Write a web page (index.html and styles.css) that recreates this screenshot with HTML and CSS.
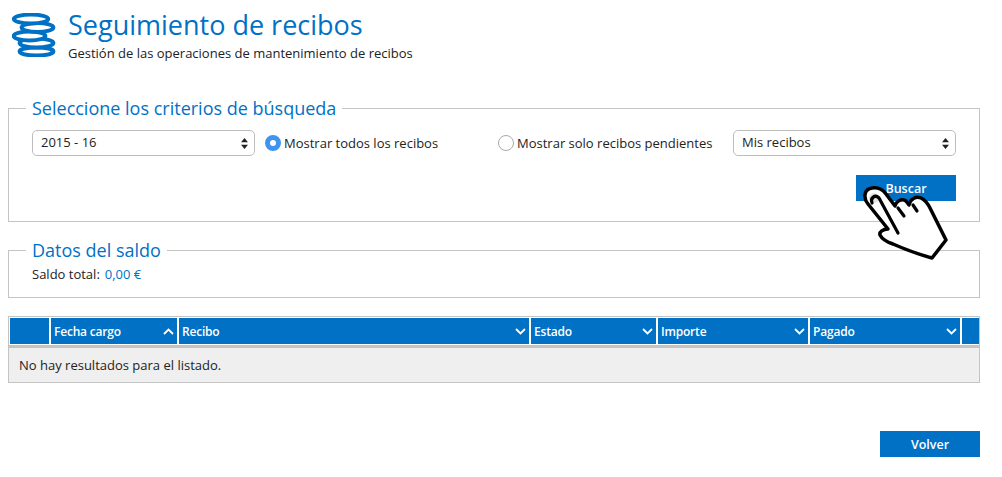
FILE: index.html
```html
<!DOCTYPE html>
<html lang="es">
<head>
<meta charset="utf-8">
<title>Seguimiento de recibos</title>
<link rel="stylesheet" href="styles.css">
</head>
<body>
<div class="page">
  <header class="head">
    <svg class="coins" viewBox="0 0 44 44" aria-hidden="true">
      <g fill="#fff" stroke="#0071c5" stroke-width="3.800">
        <ellipse cx="24.500" cy="38.500" rx="17" ry="4"/>
        <ellipse cx="24.500" cy="30" rx="17" ry="4.500"/>
        <ellipse cx="17.500" cy="23" rx="16" ry="4.500"/>
        <ellipse cx="25.500" cy="14.500" rx="16" ry="4.500"/>
        <ellipse cx="19" cy="6" rx="17.300" ry="4.500"/>
      </g>
    </svg>
    <div>
      <h1 class="title">Seguimiento de recibos</h1>
      <p class="subtitle">Gestión de las operaciones de mantenimiento de recibos</p>
    </div>
  </header>

  <fieldset class="box box-search">
    <legend class="legend">Seleccione los criterios de búsqueda</legend>
    <div class="filters">
      <div class="select"><span>2015 - 16</span>
        <svg class="updown" viewBox="0 0 7 11"><path d="M3.500 0 7 4.300H0zM3.500 11 0 6.700h7z"/></svg></div>
      <label class="radio radio-all"><span class="dot dot-on"></span>Mostrar todos los recibos</label>
      <label class="radio radio-pending"><span class="dot"></span>Mostrar solo recibos pendientes</label>
      <div class="select"><span>Mis recibos</span>
        <svg class="updown" viewBox="0 0 7 11"><path d="M3.500 0 7 4.300H0zM3.500 11 0 6.700h7z"/></svg></div>
    </div>
    <div class="actions"><button class="btn">Buscar</button></div>
  </fieldset>

  <fieldset class="box box-balance">
    <legend class="legend">Datos del saldo</legend>
    <p class="balance">Saldo total:<span class="amount">0,00 €</span></p>
  </fieldset>

  <div class="grid">
    <div class="grid-head">
      <div class="col col-blank"></div>
      <div class="col">Fecha cargo<svg class="chev" viewBox="0 0 11 7"><path d="M1 6l4.500-4.500L10 6"/></svg></div>
      <div class="col">Recibo<svg class="chev" viewBox="0 0 11 7"><path d="M1 1l4.500 4.500L10 1"/></svg></div>
      <div class="col">Estado<svg class="chev" viewBox="0 0 11 7"><path d="M1 1l4.500 4.500L10 1"/></svg></div>
      <div class="col">Importe<svg class="chev" viewBox="0 0 11 7"><path d="M1 1l4.500 4.500L10 1"/></svg></div>
      <div class="col">Pagado<svg class="chev" viewBox="0 0 11 7"><path d="M1 1l4.500 4.500L10 1"/></svg></div>
      <div class="col col-end"></div>
    </div>
    <div class="grid-empty">No hay resultados para el listado.</div>
  </div>

  <div class="footer"><button class="btn">Volver</button></div>

  <svg class="hand" viewBox="0 0 95 90" aria-hidden="true">
    <path class="hand-shape" d="M8 29C3 23 4 14 12 13C19 12 23 15 26 19L35 31C36 26 42 23 46 26L49 30C50 24 56 21 61 23C65 25 68 29 70 33L86 65L72 83C58 79 44 74 33 69C27 67 22 64 20 60C19 57 23 54 28 54z"/>
    <circle class="hand-tip" cx="14" cy="23" r="5"/>
    <path class="hand-line" d="M12 28C10 23 15 19 19 23L38 58M38 33L44 41M53 30L57 36"/>
  </svg>
</div>
</body>
</html>
```

FILE: styles.css
```css
* { box-sizing: border-box; }
html, body { margin: 0; padding: 0; background: #fff; }
body { font-family: "Open Sans", "Noto Sans", sans-serif; color: #222; font-size: 13px; }
.page { position: relative; width: 1002px; height: 477px; padding: 0 22px 0 8px; overflow: hidden; }

.head { display: flex; align-items: flex-start; height: 108px; padding: 12px 0 0 4px; }
.coins { width: 44px; height: 44px; margin-top: 1px; flex: none; }
.title { margin: -5px 0 0 12px; font-size: 27px; font-weight: 400; line-height: 36px; color: #0071c5; }
.subtitle { margin: 2px 0 0 12px; font-size: 13px; line-height: 17px; color: #222; }

.box { display: block; margin: -12px 0 0; padding: 0 23px; border: 1px solid #c4c4c4; min-width: 0; }
.legend { margin-left: -6px; padding: 0 6px; font-size: 18px; line-height: 24px; color: #0071c5; }
.box-search { height: 126px; }
.box-balance { height: 60px; margin-top: 16px; }

.filters { display: flex; align-items: center; height: 26px; margin-top: 10px; }
.select { position: relative; display: flex; align-items: center; flex: none; width: 223px; height: 26px; padding: 0 0 2px 8px; border: 1px solid #bdbdbd; border-radius: 5px; background: #fff; font-size: 13px; }
.updown { position: absolute; right: 6px; top: 7px; width: 7px; height: 11px; fill: #222; }
.radio { display: flex; align-items: center; flex: none; font-size: 13px; white-space: nowrap; }
.radio-all { margin-left: 10px; width: 233px; }
.radio-pending { width: 235px; }
.dot { width: 16px; height: 16px; margin-right: 3px; border: 1px solid #aaa; border-radius: 50%; background: #fff; flex: none; }
.dot-on { border: 5px solid #3f94f0; }

.actions { display: flex; justify-content: flex-end; margin-top: 19px; }
.btn { width: 100px; height: 26px; padding: 0; border: 0; background: #0071c5; color: #fff; font-family: "Open Sans", sans-serif; font-size: 12.500px; font-weight: 600; }

.balance { margin: 3px 0 0; font-size: 13px; line-height: 18px; }
.amount { margin-left: 5px; color: #0071c5; }

.grid { margin-top: 18px; width: 972px; height: 67px; border: 1px solid #c4c4c4; background: #efefef; }
.grid-head { display: grid; grid-template-columns: 41px 128px 352px 127px 152px 152px 1fr; height: 31px; padding: 1px 0 0 1px; background: #fff; border-bottom: 3px solid #c4c4c4; }
.col { display: flex; align-items: center; justify-content: space-between; height: 26px; padding: 0 3px 0 3px; border-right: 2px solid #fff; background: #0071c5; color: #fff; font-size: 12px; font-weight: 600; letter-spacing: -0.200px; }
.col-end { border-right: 0; }
.chev { width: 11px; height: 7px; fill: none; stroke: #fff; stroke-width: 1.800px; }
.grid-empty { padding: 0 0 0 10px; font-size: 13px; line-height: 35px; color: #222; }

.footer { display: flex; justify-content: flex-end; margin-top: 48px; }

.hand { position: absolute; left: 860px; top: 175px; width: 95px; height: 90px; }
.hand-shape { fill: #fff; stroke: #000; stroke-width: 3.500px; stroke-linejoin: round; }
.hand-tip { fill: #e4e4e4; }
.hand-line { fill: none; stroke: #000; stroke-width: 3.200px; stroke-linecap: round; }
```
